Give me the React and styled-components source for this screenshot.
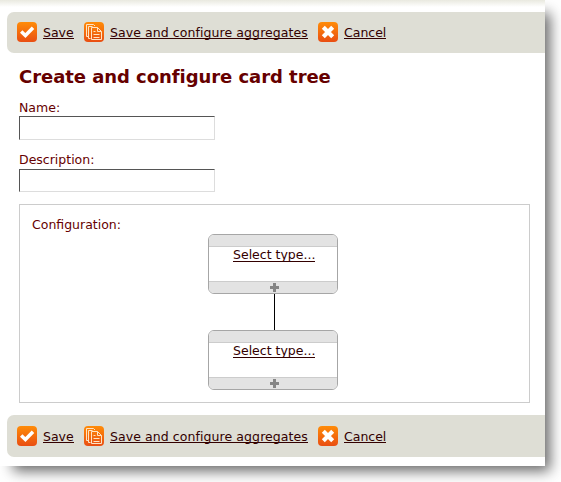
import React from "react";
import styled, { createGlobalStyle } from "styled-components";

const GlobalStyle = createGlobalStyle`
  *, *::before, *::after { box-sizing: border-box; }
  body {
    margin: 0;
    min-height: 100vh;
    overflow: hidden;
    background: #fff;
    color: #600;
    font: 12.5px/16px "DejaVu Sans", Verdana, sans-serif;
  }
`;

const Page = styled.main`
  display: flex;
  flex-direction: column;
  width: 545px;
  height: 466px;
  background: linear-gradient(#e9e9df, #fff 7px);
  padding: 12px 0 0 7px;
  box-shadow: 9px 9px 13px -4px rgba(0, 0, 0, 0.6);
`;

const ActionBar = styled.nav`
  display: flex;
  align-items: flex-start;
  gap: 10px;
  height: ${({ $bottom }) => ($bottom ? 42 : 41)}px;
  padding: ${({ $bottom }) => ($bottom ? 11 : 10)}px 0 0 10px;
  border-radius: 7px 0 0 7px;
  background: #deded5;
`;

const Action = styled.div`
  display: flex;
  gap: 6px;
  svg { display: block; flex: none; }
`;

const TextLink = styled.a`
  display: block;
  width: ${({ $width }) => $width}px;
  height: 17px;
  border-bottom: 1px solid #300;
  color: #300;
  line-height: 22px;
  letter-spacing: ${({ $spacing = 0 }) => $spacing}px;
  white-space: nowrap;
  cursor: pointer;
`;

const Content = styled.section`
  display: flex;
  flex-direction: column;
  height: 362px;
  padding: 12px 15px 0 12px;
`;

const Title = styled.h1`
  margin: 0;
  height: 34px;
  font-size: 18px;
  line-height: 24px;
  letter-spacing: -0.05px;
  white-space: nowrap;
`;

const Field = styled.label`
  display: flex;
  flex-direction: column;
  height: ${({ $height }) => $height}px;
`;

const FieldLabel = styled.span`
  height: 17px;
  line-height: ${({ $leading = 16 }) => $leading}px;
`;

const Input = styled.input`
  width: 196px;
  height: ${({ $height }) => $height}px;
  border: 1px solid;
  border-color: #555 #ddd #ddd #555;
  background: #fff;
  outline: none;
`;

const Configuration = styled.section`
  display: flex;
  flex-direction: column;
  height: 199px;
  padding: 12px 12px 0;
  border: 1px solid #ccc;
`;

const Tree = styled.div`
  display: flex;
  flex-direction: column;
  width: 130px;
  margin-left: 176px;
`;

const Card = styled.div`
  display: flex;
  flex-direction: column;
  height: 60px;
  border: 1px solid #a6a6a6;
  border-radius: 6px;
  overflow: hidden;
`;

const CardHeader = styled.div`
  height: 12px;
  border-bottom: 1px solid #ccc;
  background: #e3e3e3;
`;

const CardBody = styled.div`
  height: 34px;
  padding: 0 0 0 24px;
`;

const CardLink = styled(TextLink)`
  height: 15px;
  line-height: 16px;
`;

const CardFooter = styled.div`
  height: 12px;
  padding: 1px 0 0 61px;
  border-top: 1px solid #ccc;
  background: #e3e3e3;
  svg { display: block; }
`;

const Connector = styled.div`
  width: 1px;
  height: 36px;
  margin-left: 66px;
  background: #000;
`;

function IconTile({ id, children }) {
  return (
    <svg width="20" height="20" viewBox="0 0 20 20">
      <defs>
        <linearGradient id={id} x2="0" y2="1">
          <stop stopColor="#ff8c08" />
          <stop offset="1" stopColor="#e94e12" />
        </linearGradient>
      </defs>
      <rect width="20" height="20" rx="4" fill={`url(#${id})`} />
      {children}
    </svg>
  );
}

function Actions({ bottom }) {
  const key = bottom ? "bottom" : "top";
  return (
    <ActionBar $bottom={bottom}>
      <Action>
        <IconTile id={`${key}-save`}>
          <path d="M4.200 9.500 8.400 13.500 16 5.700" fill="none" stroke="#fff" strokeWidth="3.500" />
        </IconTile>
        <TextLink $width={31}>Save</TextLink>
      </Action>
      <Action>
        <IconTile id={`${key}-aggregates`}>
          <g fill="none" stroke="#ffe3c4">
            <path d="M4.500 14.500h-2v-12h7l1.500 1.500" />
            <path d="M6.500 16.500h-2v-12h4" />
            <path d="M7.500 5.500h6l4 4v8h-10z" />
            <path d="M13.500 5.500v4h4M9.500 9.500h2M9.500 12.500h6M9.500 15.500h6" />
          </g>
        </IconTile>
        <TextLink $width={198} $spacing={0.08}>Save and configure aggregates</TextLink>
      </Action>
      <Action>
        <IconTile id={`${key}-cancel`}>
          <path d="m5.300 5.300 9.400 9.400m0-9.400-9.400 9.400" stroke="#fff" strokeWidth="4.200" />
        </IconTile>
        <TextLink $width={42}>Cancel</TextLink>
      </Action>
    </ActionBar>
  );
}

function TreeCard() {
  return (
    <Card>
      <CardHeader />
      <CardBody>
        <CardLink $width={82}>Select type...</CardLink>
      </CardBody>
      <CardFooter>
        <svg width="9" height="9" viewBox="0 0 9 9">
          <path d="M3 0h3v3h3v3H6v3H3V6H0V3h3z" fill="#858585" />
        </svg>
      </CardFooter>
    </Card>
  );
}

export default function App() {
  return (
    <>
      <GlobalStyle />
      <Page>
        <Actions />
        <Content>
          <Title>Create and configure card tree</Title>
          <Field $height={53}>
            <FieldLabel $leading={18}>Name:</FieldLabel>
            <Input $height={24} />
          </Field>
          <Field $height={52}>
            <FieldLabel>Description:</FieldLabel>
            <Input $height={23} />
          </Field>
          <Configuration>
            <FieldLabel>Configuration:</FieldLabel>
            <Tree>
              <TreeCard />
              <Connector />
              <TreeCard />
            </Tree>
          </Configuration>
        </Content>
        <Actions bottom />
      </Page>
    </>
  );
}
